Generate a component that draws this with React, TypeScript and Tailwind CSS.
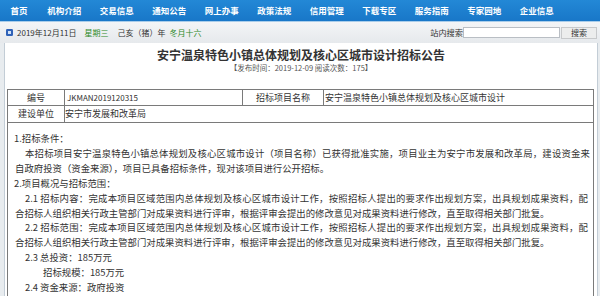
import React from "react";

const navItems = [
  "机构介绍",
  "交易信息",
  "通知公告",
  "网上办事",
  "政策法规",
  "信用管理",
  "下载专区",
  "服务指南",
  "专家园地",
  "企业信息",
];

const font = { fontFamily: '"Noto Sans CJK SC", "Noto Sans", sans-serif' };

export default function App() {
  return (
    <div
      className="w-[600px] h-[296px] overflow-hidden bg-[#e8ecef] text-[#333]"
      style={font}
    >
      {/* nav */}
      <div className="h-[21px] bg-gradient-to-b from-[#2388d6] to-[#1877c8] flex items-center">
        <div className="w-[38px] text-center text-white font-bold text-[8.5px] leading-none">
          首页
        </div>
        {navItems.map((n) => (
          <div
            key={n}
            className="w-[52.5px] text-center text-white font-bold text-[8.5px] leading-none"
          >
            {n}
          </div>
        ))}
      </div>
      <div className="h-[1px] bg-[#a9cdea]" />
      {/* date bar */}
      <div className="h-[21px] bg-gradient-to-b from-[#f3f5f7] to-[#e6e9ec] flex items-center">
        <div className="ml-[6px] w-[7px] h-[7px]">
          <svg width="7" height="7" viewBox="0 0 7 7">
            <rect x="0" y="0" width="7" height="7" rx="1.2" fill="#2f62b8" />
            <rect x="2" y="2" width="3" height="3" fill="#cfe0f7" />
          </svg>
        </div>
        <span className="ml-[4px] text-[8px] leading-none">2019年12月11日</span>
        <span className="ml-[8px] text-[8px] leading-none text-[#2f8a2a]">星期三</span>
        <span className="ml-[9px] text-[8px] leading-none">己亥（猪）年</span>
        <span className="ml-[4px] text-[8px] leading-none text-[#2f8a2a]">冬月十六</span>
        <div className="flex-1" />
        <span className="text-[8.2px] leading-none">站内搜索</span>
        <div className="w-[97px] h-[11px] bg-white border border-[#b9bec4]" />
        <div className="ml-[1px] mr-[3px] w-[36px] h-[12px] bg-[#eceded] border border-[#c7c9cb] flex items-center justify-center text-[8px] leading-none">
          搜索
        </div>
      </div>
      {/* frame */}
      <div className="ml-[4px] w-[594px] h-[260px] bg-white border-l border-r border-[#c3cdd6]">
        <div className="pt-[5px]">
          <div className="h-[14px] text-center text-[12px] leading-[14px] font-bold text-[#333]">
            安宁温泉特色小镇总体规划及核心区城市设计招标公告
          </div>
        </div>
        <div className="mt-[2px] h-[8px] text-center text-[7.5px] leading-[8px] text-[#555]">
          【发布时间：2019-12-09 阅读次数：175】
        </div>
        <div className="mt-[17px] ml-[2px] mr-[3px] border border-[#7a7a7a] text-[9px]">
          <div className="flex h-[16px] border-b border-[#7a7a7a]">
            <div className="w-[57px] border-r border-[#7a7a7a] flex items-center justify-center">
              编号
            </div>
            <div className="w-[178px] border-r border-[#7a7a7a] flex items-center pl-[2px] text-[8px]">
              JKMAN2019120315
            </div>
            <div className="w-[81px] border-r border-[#7a7a7a] flex items-center justify-center">
              招标项目名称
            </div>
            <div className="flex-1 flex items-center pl-[1px]">
              安宁温泉特色小镇总体规划及核心区城市设计
            </div>
          </div>
          <div className="flex h-[17px] border-b border-[#7a7a7a]">
            <div className="w-[57px] border-r border-[#7a7a7a] flex items-center justify-center">
              建设单位
            </div>
            <div className="flex-1 flex items-center">安宁市发展和改革局</div>
          </div>
          <div className="h-[200px] pl-[7px] pr-[3px] pt-[8px] text-[9.4px] leading-[14.9px] text-[#333]">
            <div className="-ml-[1px]">1.招标条件：</div>
            <div className="ml-[10px] text-justify [text-align-last:justify]">
              本招标项目安宁温泉特色小镇总体规划及核心区城市设计（项目名称）已获得批准实施，项目业主为安宁市发展和改革局，建设资金来
            </div>
            <div>自政府投资（资金来源），项目已具备招标条件，现对该项目进行公开招标。</div>
            <div className="-ml-[1px]">2.项目概况与招标范围：</div>
            <div className="ml-[10px] mr-[2px] text-justify [text-align-last:justify]">
              2.1 招标内容：完成本项目区域范围内总体规划及核心区城市设计工作，按照招标人提出的要求作出规划方案，出具规划成果资料，配
            </div>
            <div>合招标人组织相关行政主管部门对成果资料进行评审，根据评审会提出的修改意见对成果资料进行修改，直至取得相关部门批复。</div>
            <div className="ml-[10px] mr-[2px] text-justify [text-align-last:justify]">
              2.2 招标范围：完成本项目区域范围内总体规划及核心区城市设计工作，按照招标人提出的要求作出规划方案，出具规划成果资料，配
            </div>
            <div>合招标人组织相关行政主管部门对成果资料进行评审，根据评审会提出的修改意见对成果资料进行修改，直至取得相关部门批复。</div>
            <div className="ml-[10px]">2.3 总投资：185万元</div>
            <div className="ml-[28px]">招标规模：185万元</div>
            <div className="ml-[10px]">2.4 资金来源：政府投资</div>
          </div>
        </div>
      </div>
    </div>
  );
}
